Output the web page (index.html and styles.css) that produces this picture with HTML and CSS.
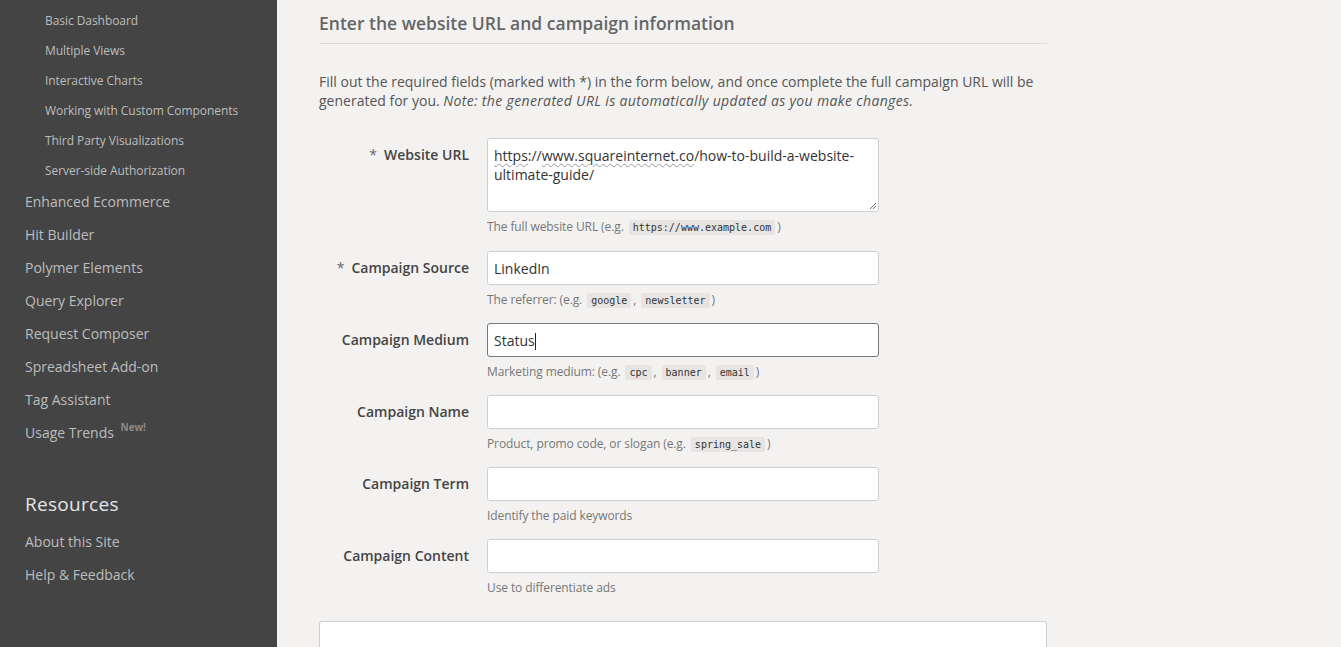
FILE: index.html
```html
<!DOCTYPE html>
<html>
<head>
<meta charset="utf-8">
<link rel="stylesheet" href="styles.css">
</head>
<body>
<div class="page">
  <nav class="sidebar">
    <ul class="sub">
      <li>Basic Dashboard</li>
      <li>Multiple Views</li>
      <li>Interactive Charts</li>
      <li>Working with Custom Components</li>
      <li>Third Party Visualizations</li>
      <li>Server-side Authorization</li>
    </ul>
    <ul class="top">
      <li>Enhanced Ecommerce</li>
      <li>Hit Builder</li>
      <li>Polymer Elements</li>
      <li>Query Explorer</li>
      <li>Request Composer</li>
      <li>Spreadsheet Add-on</li>
      <li>Tag Assistant</li>
      <li>Usage Trends <sup class="new">New!</sup></li>
    </ul>
    <h2 class="res-title">Resources</h2>
    <ul class="top">
      <li>About this Site</li>
      <li>Help &amp; Feedback</li>
    </ul>
  </nav>
  <main class="main">
    <h1 class="title">Enter the website URL and campaign information</h1>
    <p class="intro">Fill out the required fields (marked with *) in the form below, and once complete the full campaign URL will be<br>generated for you. <em>Note: the generated URL is automatically updated as you make changes.</em></p>
    <div class="form">
      <div class="row first">
        <label class="label"><span class="req">*</span>Website URL</label>
        <div class="field">
          <div class="input textarea"><span class="sp">https</span>://<span class="sp">www.squareinternet.co</span>/how-to-build-a-website-<br>ultimate-guide/<svg class="grip" width="8" height="8" viewBox="0 0 8 8"><path d="M7 1L1 7M7 4L4 7" stroke="#777" stroke-width="1"/></svg></div>
          <div class="help">The full website URL (e.g. <code>https://www.example.com</code>)</div>
        </div>
      </div>
      <div class="row">
        <label class="label"><span class="req">*</span>Campaign Source</label>
        <div class="field">
          <div class="input">LinkedIn</div>
          <div class="help">The referrer: (e.g. <code>google</code>, <code>newsletter</code>)</div>
        </div>
      </div>
      <div class="row">
        <label class="label">Campaign Medium</label>
        <div class="field">
          <div class="input focus">Status<span class="caret"></span></div>
          <div class="help">Marketing medium: (e.g. <code>cpc</code>, <code>banner</code>, <code>email</code>)</div>
        </div>
      </div>
      <div class="row">
        <label class="label">Campaign Name</label>
        <div class="field">
          <div class="input"></div>
          <div class="help">Product, promo code, or slogan (e.g. <code>spring_sale</code>)</div>
        </div>
      </div>
      <div class="row">
        <label class="label">Campaign Term</label>
        <div class="field">
          <div class="input"></div>
          <div class="help">Identify the paid keywords</div>
        </div>
      </div>
      <div class="row last">
        <label class="label">Campaign Content</label>
        <div class="field">
          <div class="input"></div>
          <div class="help">Use to differentiate ads</div>
        </div>
      </div>
    </div>
    <div class="result"></div>
  </main>
</div>
</body>
</html>
```

FILE: styles.css
```css
* { box-sizing: border-box; }
html, body { margin: 0; padding: 0; height: 100%; }
body {
  font-family: "Open Sans", "Noto Sans", sans-serif;
  background: #f3f2f1;
  overflow: hidden;
}
.page { display: flex; height: 647px; }
.sidebar {
  width: 277px;
  flex: none;
  background: #444444;
  padding-top: 6px;
}
.sidebar ul { list-style: none; margin: 0; padding: 0; }
.sub li {
  padding-left: 45px;
  font-size: 12px;
  line-height: 30px;
  color: #bdbdbd;
  letter-spacing: -0.06px;
}
.sub { margin-bottom: -1px !important; }
.top li {
  padding-left: 25px;
  font-size: 14px;
  line-height: 33px;
  color: #bdbdbd;
}
.new {
  font-size: 10px;
  font-weight: 700;
  color: #8a8a8a;
  vertical-align: 0;
  position: relative;
  top: -7px;
  margin-left: 3px;
}
.res-title {
  margin: 39px 0 7px;
  padding-left: 25px;
  font-size: 19px;
  font-weight: 400;
  line-height: 28px;
  color: #e4e4e4;
  letter-spacing: 0.3px;
}
.main {
  width: 728px;
  margin-left: 42px;
  padding-top: 10px;
}
.title {
  margin: 0;
  font-size: 17.5px;
  font-weight: 600;
  line-height: 27px;
  color: #666;
  padding-bottom: 6px;
  border-bottom: 1px solid #dddbd9;
}
.intro {
  margin: 28px 0 0;
  font-size: 14px;
  line-height: 19px;
  color: #555;
}
.intro em { letter-spacing: 0.35px; }
.form { margin-top: 28px; padding-bottom: 1px; }
.row {
  display: flex;
  margin-bottom: 14px;
}
.row.first { margin-bottom: 15px; }
.row.last { margin-bottom: 0; }
.label {
  width: 168px;
  flex: none;
  text-align: right;
  padding-right: 18px;
  padding-top: 7px;
  font-size: 14px;
  font-weight: 600;
  line-height: 19px;
  color: #444;
  white-space: nowrap;
}
.req { font-weight: 400; color: #666; margin-right: 7px; }
.field { width: 392px; }
.input {
  position: relative;
  height: 34px;
  background: #fff;
  border: 1px solid #cfcfcf;
  border-radius: 3px;
  padding: 7px 6px;
  font-size: 14px;
  line-height: 19px;
  color: #333;
}
.input.textarea { height: 74px; }
.input.focus { border-color: #777; }
.sp {
  text-decoration: underline wavy #9a9a9a;
  text-decoration-thickness: 1px;
  text-underline-offset: 2px;
}
.grip { position: absolute; right: 1px; bottom: 1px; }
.caret {
  display: inline-block;
  width: 1px;
  height: 17px;
  background: #222;
  vertical-align: -4px;
}
.help {
  margin-top: 6px;
  height: 18px;
  font-size: 12px;
  line-height: 18px;
  color: #777;
  letter-spacing: -0.1px;
}
code {
  font-family: "DejaVu Sans Mono", "Liberation Mono", monospace;
  font-size: 10px;
  line-height: 1;
  color: #333;
  background: #e6e5e4;
  padding: 2px 4px;
  margin: 0 2px;
  border-radius: 2px;
  letter-spacing: 0;
}
.result {
  margin-top: 23px;
  height: 26px;
  background: #fff;
  border: 1px solid #cfcfcf;
  border-bottom: none;
  border-radius: 3px 3px 0 0;
}
```
